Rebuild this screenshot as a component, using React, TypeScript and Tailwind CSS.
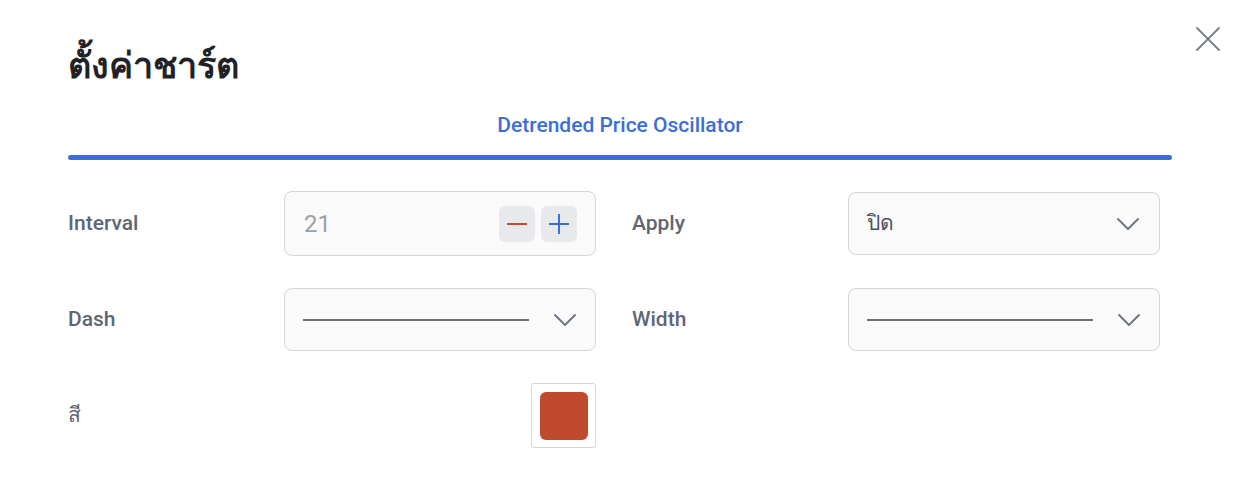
import React from "react";

function Chevron() {
  return (
    <svg width="22" height="12" viewBox="0 0 22 12" fill="none">
      <path d="M1 1l10 10L21 1" stroke="#6b7280" strokeWidth="1.8" strokeLinecap="round" strokeLinejoin="round" />
    </svg>
  );
}

export default function App() {
  return (
    <div className="relative w-[1244px] h-[494px] bg-white font-['Roboto','Noto_Sans',sans-serif]">
      <button className="absolute left-[1196px] top-[27px] w-[24px] h-[24px]">
        <svg width="24" height="24" viewBox="0 0 24 24" fill="none">
          <path d="M1 1l22 22M23 1L1 23" stroke="#7a7f88" strokeWidth="1.8" strokeLinecap="round" />
        </svg>
      </button>
      <div className="pl-[68px] pr-[72px] pt-[40px]">
        <h1 className="text-[36px] leading-[52px] font-bold text-[#1f2328]">ตั้งค่าชาร์ต</h1>
        <div className="mt-[18px] flex flex-col items-center">
          <div className="text-[21px] leading-[30px] font-medium text-[#3a6fd8]">Detrended Price Oscillator</div>
          <div className="mt-[15px] h-[5px] w-full rounded-full bg-[#3b6fd6]" />
        </div>
        <div className="mt-[31px] grid grid-cols-[528px_528px] gap-x-[36px] gap-y-[32px]">
          <div className="flex items-center h-[65px]">
            <div className="w-[216px] text-[21px] font-medium text-[#5f6673]">Interval</div>
            <div className="flex items-center w-[312px] h-[65px] rounded-[8px] border border-[#d4d5d8] bg-[#fafafa] pl-[19px] pr-[18px]">
              <span className="flex-1 text-[24px] text-[#9ca0a6]">21</span>
              <div className="flex gap-[6px]">
                <div className="w-[36px] h-[36px] rounded-[6px] bg-[#e8e9ec] flex items-center justify-center">
                  <svg width="22" height="4" viewBox="0 0 22 4"><path d="M1 2h20" stroke="#cc4a2c" strokeWidth="2" /></svg>
                </div>
                <div className="w-[36px] h-[36px] rounded-[6px] bg-[#e8e9ec] flex items-center justify-center">
                  <svg width="22" height="22" viewBox="0 0 22 22"><path d="M1 11h20M11 1v20" stroke="#3b6fd6" strokeWidth="2" /></svg>
                </div>
              </div>
            </div>
          </div>
          <div className="flex items-center h-[65px]">
            <div className="w-[216px] text-[21px] font-medium text-[#5f6673]">Apply</div>
            <div className="flex items-center w-[312px] h-[63px] rounded-[8px] border border-[#d4d5d8] bg-[#fafafa] pl-[18px] pr-[20px]">
              <span className="flex-1 text-[21px] font-medium text-[#4b5260]">ปิด</span>
              <Chevron />
            </div>
          </div>
          <div className="flex items-center h-[63px]">
            <div className="w-[216px] text-[21px] font-medium text-[#5f6673]">Dash</div>
            <div className="flex items-center w-[312px] h-[63px] rounded-[8px] border border-[#d4d5d8] bg-[#fafafa] pl-[18px] pr-[19px]">
              <div className="w-[226px] h-[2px] bg-[#707070]" />
              <div className="flex-1" />
              <Chevron />
            </div>
          </div>
          <div className="flex items-center h-[63px]">
            <div className="w-[216px] text-[21px] font-medium text-[#5f6673]">Width</div>
            <div className="flex items-center w-[312px] h-[63px] rounded-[8px] border border-[#d4d5d8] bg-[#fafafa] pl-[18px] pr-[19px]">
              <div className="w-[226px] h-[2px] bg-[#707070]" />
              <div className="flex-1" />
              <Chevron />
            </div>
          </div>
          <div className="flex items-center h-[65px]">
            <div className="w-[216px] text-[21px] font-medium text-[#5f6673]">สี</div>
            <div className="flex w-[312px] justify-end">
              <div className="w-[65px] h-[65px] rounded-[3px] border border-[#d4d5d8] bg-white flex items-center justify-center">
                <div className="w-[48px] h-[48px] rounded-[6px] bg-[#c04a2e]" />
              </div>
            </div>
          </div>
        </div>
      </div>
    </div>
  );
}
